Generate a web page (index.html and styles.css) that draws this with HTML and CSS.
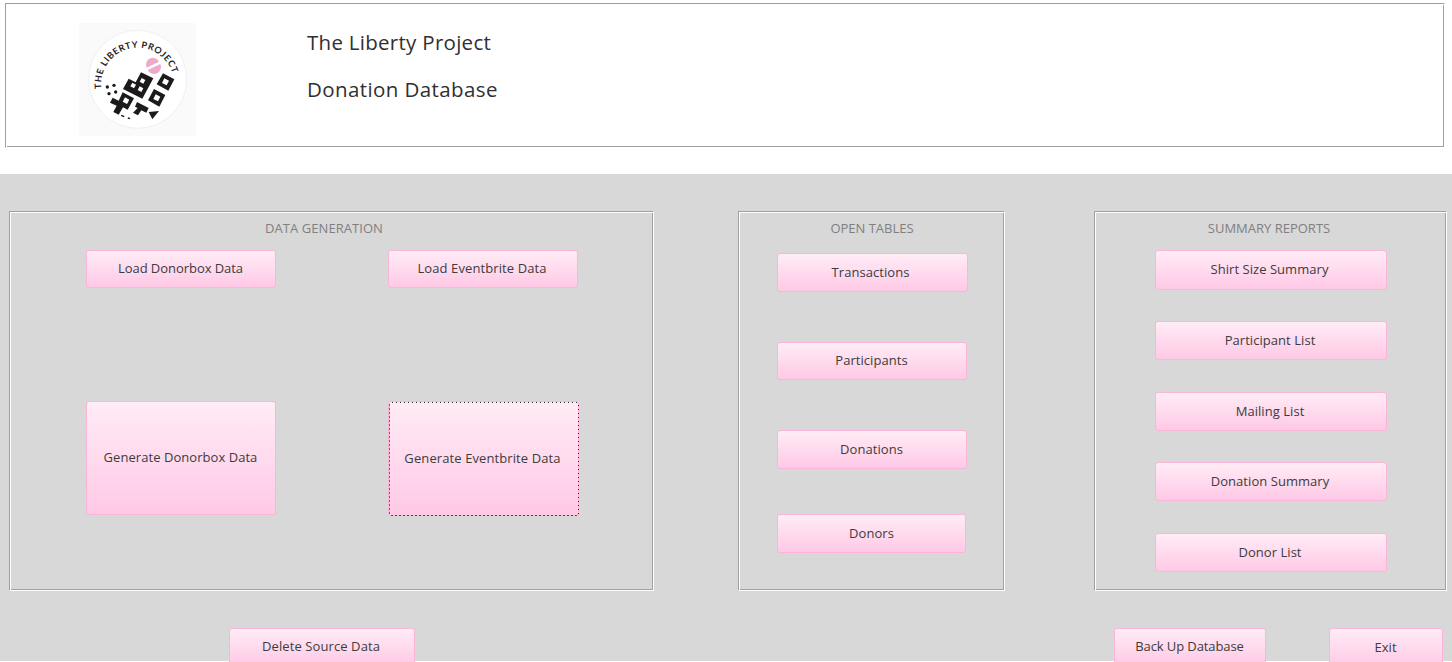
FILE: index.html
```html
<!DOCTYPE html>
<html lang="en">
<head>
<meta charset="utf-8">
<title>The Liberty Project</title>
<link rel="stylesheet" href="styles.css">
</head>
<body>
<header class="banner frame">
  <svg class="logo" viewBox="27 24 351 339" role="img" aria-label="The Liberty Project logo">
    <rect x="27" y="24" width="351" height="339" fill="#fafafa"/>
    <circle cx="203" cy="193" r="147" fill="#fff" stroke="#f0f0f0" stroke-width="3"/>
    <path id="arc" d="M94 221A110 110 0 0 1 203 98A110 110 0 0 1 309 180" fill="none"/>
    <text class="logo-text" textLength="324"><textPath href="#arc" textLength="324">THE LIBERTY PROJECT</textPath></text>
    <g fill="#eeaacb"><path d="M230 158A20.500 20.500 0 0 1 267 140Z"/><path d="M233 165A20.500 20.500 0 0 0 271 147Z"/></g>
    <g fill="#1c1a1b">
      <circle cx="112" cy="216" r="5"/><circle cx="132" cy="211" r="5"/><circle cx="117" cy="236" r="5"/><circle cx="137" cy="231" r="5"/>
      <path d="M213 172L250 190L217 251L159 222L176 191L197 202Z"/>
      <path d="M279 175L313 193L295 227L260 208Z"/>
      <path d="M252 222L286 240L268 275L234 256Z"/>
      <path d="M158 232L192 250L173 284L159 277L146 299L130 291L140 272L120 263L128 248L146 257Z"/>
      <path d="M201 261L236 279L229 293L214 286L204 301L189 293L203 279L195 275Z"/>
      <path d="M236 291L267 288L247 313Z"/>
      <path d="M154 299L164 303L161 307L153 303ZM174 307L181 309L179 313L173 311Z"/>
    </g>
    <g fill="#fff"><path d="M215 189L226 195L220 206L209 200Z"/><path d="M187 203L198 209L192 220L181 214Z"/><path d="M209 214L220 220L214 231L203 225Z"/><path d="M283 190L297 197L290 211L276 204Z"/><path d="M257 238L271 245L264 259L250 252Z"/><path d="M165 247L178 254L171 267L158 260Z"/></g>
  </svg>
  <div class="titles"><h1>The Liberty Project</h1><h1 class="subtitle">Donation Database</h1></div>
</header>
<main class="workspace">
  <div class="panels">
    <section class="frame generation">
      <h2>DATA GENERATION</h2>
      <div class="generation-grid">
        <button class="load">Load Donorbox Data</button><button>Load Eventbrite Data</button>
        <button class="tall">Generate Donorbox Data</button><button class="tall focused">Generate Eventbrite Data</button>
      </div>
    </section>
    <section class="frame tables">
      <h2>OPEN TABLES</h2>
      <div class="stack">
        <button class="first">Transactions</button><button>Participants</button><button class="donations">Donations</button><button class="donors">Donors</button>
      </div>
    </section>
    <section class="frame reports">
      <h2>SUMMARY REPORTS</h2>
      <div class="stack">
        <button class="first">Shirt Size Summary</button><button>Participant List</button><button>Mailing List</button><button class="summary">Donation Summary</button><button>Donor List</button>
      </div>
    </section>
  </div>
  <footer class="actions"><button class="delete">Delete Source Data</button><button class="backup">Back Up Database</button><button class="exit">Exit</button></footer>
</main>
</body>
</html>
```
FILE: styles.css
```css
* { box-sizing: border-box; }
html, body { height: 662px; overflow: hidden; }
body { margin: 0; padding-top: 3px; background: #fff; font-family: "Open Sans", "Noto Sans", sans-serif; }
.frame { border: 1px solid; border-color: #a0a0a0 #fff #fff #a0a0a0; box-shadow: inset 1px 1px #fff, inset -1px -1px #a0a0a0; }
.banner { display: flex; width: 1440px; height: 145px; margin-left: 5px; padding: 19px 0 0 73px; }
.logo { width: 117px; height: 113px; flex: none; }
.logo-text { font: 700 27px Lato, sans-serif; fill: #242223; }
.titles { margin: 4px 0 0 111px; }
h1 { margin: 0; color: #303030; font: 400 20.5px/30px "Open Sans", sans-serif; letter-spacing: 0.28px; white-space: nowrap; }
.subtitle { margin-top: 17px; letter-spacing: 0.4px; }
.workspace { height: 487px; margin-top: 26px; padding: 37px 5px 0 9px; background: #d8d8d8; }
.panels { display: flex; justify-content: space-between; height: 380px; }
.generation { width: 645px; }
.tables { width: 267px; margin-left: -5px; }
.reports { width: 353px; }
h2 { margin: 6px 0 0; height: 21px; color: #808080; font: 400 13px/20px "Open Sans", sans-serif; text-align: center; }
.generation h2 { padding-right: 15px; letter-spacing: 0.06px; }
.tables h2 { padding-left: 1px; }
.reports h2 { padding-right: 3px; }
button { display: block; height: 38px; margin: 0; padding: 0 1px 3px 0; border: 1px solid #fab5d7; border-radius: 3px; background: linear-gradient(#ffecf6, #ffc9e6); color: #3c3c3c; font: 400 13px/18px "Open Sans", sans-serif; letter-spacing: 0.05px; white-space: nowrap; }
.generation-grid { display: grid; grid-template-columns: 190px 191px; grid-template-rows: 38px 115px; column-gap: 112px; row-gap: 113px; margin: 11px 0 0 76px; }
.generation-grid button { width: 190px; }
.generation-grid .load { letter-spacing: -0.05px; padding-right: 1px; }
.generation-grid button:nth-child(even) { letter-spacing: 0.1px; padding-right: 2px; }
.generation-grid .tall { height: 114px; }
.generation-grid .focused { position: relative; width: 191px; height: 115px; padding-bottom: 2px; }
.focused::after {
  content: "";
  position: absolute;
  inset: 0 -1px -1px 0;
  border-radius: 3px;
  background:
    repeating-linear-gradient(90deg, transparent 0 3px, #202020 3px 4px) 0 0 / 100% 1px no-repeat,
    repeating-linear-gradient(90deg, #fab5d7 0 2px, #60404f 2px 4px) 0 100% / 100% 1px no-repeat,
    repeating-linear-gradient(#fab5d7 0 2px, #80596d 2px 4px) 0 0 / 1px 100% no-repeat,
    repeating-linear-gradient(#fab5d7 0 3px, #202020 3px 4px) 100% 0 / 1px 100% no-repeat;
}
.stack { display: flex; flex-direction: column; }
.tables .stack { margin: 14px 0 0 38px; gap: 50px; }
.tables button { width: 190px; }
.tables .first { width: 191px; height: 39px; padding: 0 4px 1px 0; }
.tables .donations { height: 39px; padding-bottom: 1px; }
.tables .donors { width: 189px; height: 39px; margin-top: -5px; padding: 0 0 1px; }
.reports .stack { margin: 11px 0 0 60px; gap: 32px; }
.reports button { width: 232px; height: 39px; padding: 0 2px 1px 0; }
.reports .first { height: 40px; margin-bottom: -1px; padding: 0 3px 3px 0; }
.reports .summary { margin-top: -1px; }
.actions { display: flex; height: 71px; padding: 37px 0 0 220px; }
.delete { width: 186px; padding-right: 2px; letter-spacing: 0.1px; }
.backup { width: 152px; margin-left: 699px; padding-right: 1px; letter-spacing: -0.1px; }
.exit { width: 114px; height: 39px; margin-left: 63px; padding-bottom: 1px; }
```
